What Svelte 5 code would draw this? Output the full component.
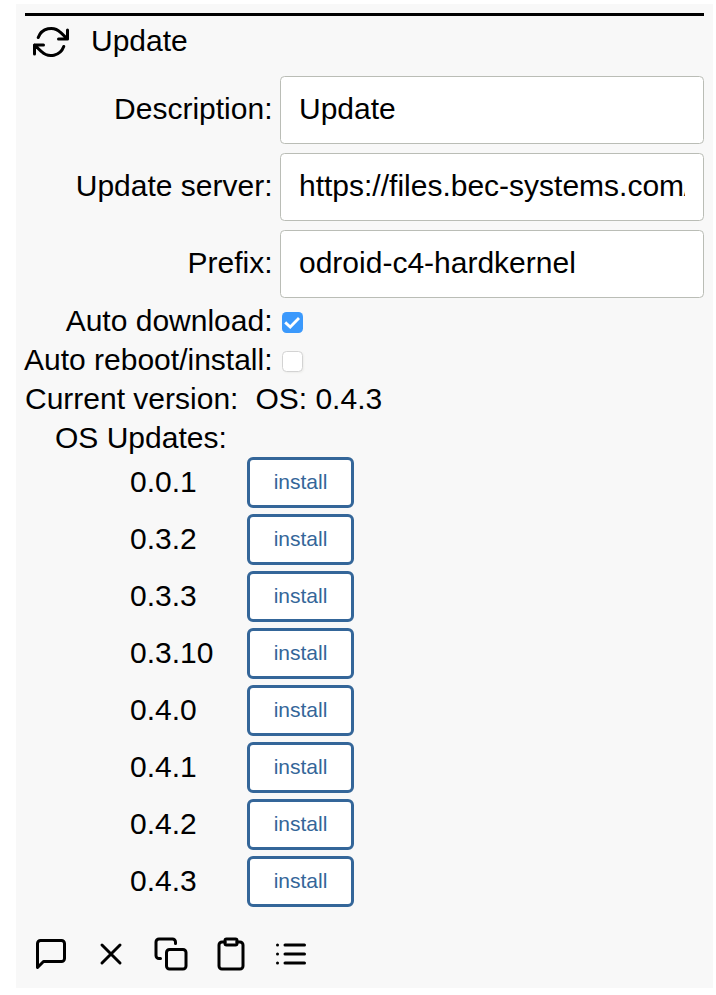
<script>
  let description = $state('Update');
  let server = $state('https://files.bec-systems.com/iot/updates');
  let prefix = $state('odroid-c4-hardkernel');
  let autoDownload = $state(true);
  let autoReboot = $state(false);
  const versions = ['0.0.1', '0.3.2', '0.3.3', '0.3.10', '0.4.0', '0.4.1', '0.4.2', '0.4.3'];
</script>

<section class="panel">
  <header>
    <svg class="icon" viewBox="0 0 24 24"><path d="M23 4v6h-6M1 20v-6h6M3.51 9a9 9 0 0 1 14.85-3.36L23 10M1 14l4.64 4.36A9 9 0 0 0 20.49 15" /></svg>
    <span>Update</span>
  </header>

  <div class="rows">
    <label class="row field"><span class="name">Description:</span><input type="text" bind:value={description} /></label>
    <label class="row field"><span class="name">Update server:</span><input type="text" bind:value={server} /></label>
    <label class="row field"><span class="name">Prefix:</span><input type="text" bind:value={prefix} /></label>
    <label class="row"><span class="name">Auto download:</span><input type="checkbox" bind:checked={autoDownload} />{@render box(autoDownload)}</label>
    <label class="row"><span class="name">Auto reboot/install:</span><input type="checkbox" bind:checked={autoReboot} />{@render box(autoReboot)}</label>
    <div class="row version"><span>Current version:</span><span>OS: 0.4.3</span></div>
    <div class="row updates">OS Updates:</div>
  </div>

  <ul>
    {#each versions as version}
      <li><span>{version}</span><button>install</button></li>
    {/each}
  </ul>

  <footer>
    <svg class="icon" viewBox="0 0 24 24"><path d="M21 15a2 2 0 0 1-2 2H7l-4 4V5a2 2 0 0 1 2-2h14a2 2 0 0 1 2 2z" /></svg>
    <svg class="icon" viewBox="0 0 24 24"><path d="M18 6 6 18M6 6l12 12" /></svg>
    <svg class="icon" viewBox="0 0 24 24"><rect x="9" y="9" width="13" height="13" rx="2" /><path d="M5 15H4a2 2 0 0 1-2-2V4a2 2 0 0 1 2-2h9a2 2 0 0 1 2 2v1" /></svg>
    <svg class="icon" viewBox="0 0 24 24"><path d="M16 4h2a2 2 0 0 1 2 2v14a2 2 0 0 1-2 2H6a2 2 0 0 1-2-2V6a2 2 0 0 1 2-2h2" /><rect x="8" y="2" width="8" height="4" rx="1" /></svg>
    <svg class="icon" viewBox="0 0 24 24"><path d="M8 6h13M8 12h13M8 18h13M3 6h.01M3 12h.01M3 18h.01" /></svg>
  </footer>
</section>

{#snippet box(checked)}
  <span class="box" class:checked>
    {#if checked}
      <svg viewBox="0 0 21 21"><path d="M3.2 10.4 8.2 15 17 6" /></svg>
    {/if}
  </span>
{/snippet}

<style>
  :global(body) { background: #fff; }
  .panel {
    box-sizing: border-box;
    width: 697px;
    height: 984px;
    margin: 4px 0 0 16px;
    padding: 9px;
    background: #f8f8f8;
    color: #000;
    font: 30px/28px "Liberation Sans", Arial, sans-serif;
    white-space: nowrap;
  }
  .icon {
    width: 36px;
    height: 36px;
    fill: none;
    stroke: #000;
    stroke-width: 2;
    stroke-linecap: round;
    stroke-linejoin: round;
  }
  header {
    display: flex;
    align-items: center;
    gap: 22px;
    height: 52px;
    padding: 0 8px;
    border-top: 3px solid #000;
  }
  header span, .row > span:not(.box), li span { padding-bottom: 2px; line-height: 30px; }
  .rows {
    display: flex;
    flex-direction: column;
    gap: 9px;
    margin-top: 8px;
  }
  .row { display: flex; align-items: center; height: 30px; }
  .field { height: 68px; }
  .name {
    display: flex;
    justify-content: flex-end;
    width: 247.5px;
    margin-right: 7.5px;
  }
  input[type='text'] {
    box-sizing: border-box;
    flex: 1;
    min-width: 0;
    height: 68px;
    margin: 0;
    padding: 0 18px 2px;
    border: 1px solid #babdb6;
    border-radius: 4.5px;
    background: #fff;
    color: #000;
    font: inherit;
    outline: none;
  }
  input[type='checkbox'] { display: none; }
  .box {
    box-sizing: border-box;
    width: 21px;
    height: 21px;
    margin-left: 2px;
    border: 1px solid #d3d3d3;
    border-radius: 4.5px;
    background: #fff;
    box-shadow: 1px 1px 2px #eeeeec;
  }
  .box.checked { border: 0; background: #3b99fc; box-shadow: none; }
  .box svg { display: block; width: 21px; height: 21px; fill: none; stroke: #fff; stroke-width: 2.8; }
  .version { gap: 17px; }
  .updates { box-sizing: border-box; padding: 0 0 2px 30px; }
  ul {
    display: flex;
    flex-direction: column;
    gap: 6px;
    margin: 3px 0 0;
    padding: 0 0 0 105px;
    list-style: none;
  }
  li { display: flex; align-items: center; height: 51px; }
  li span { width: 117px; }
  button {
    box-sizing: border-box;
    width: 107px;
    height: 51px;
    padding: 0 0 2px;
    border: 3px solid #346699;
    border-radius: 6px;
    background: #fff;
    color: #346699;
    font: 21px/21px "Liberation Sans", Arial, sans-serif;
  }
  footer { display: flex; gap: 24px; margin-top: 29px; padding-left: 8px; }
</style>
